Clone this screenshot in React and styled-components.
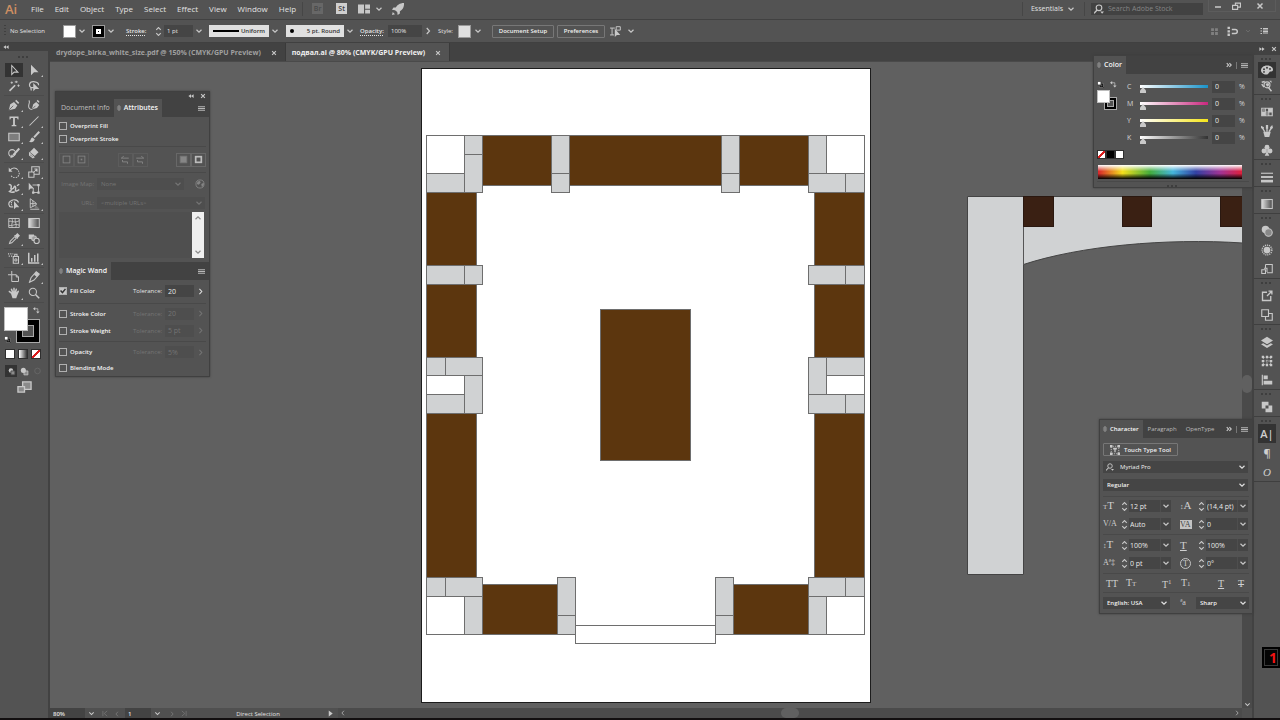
import React, { useState } from 'react';
import styled, { createGlobalStyle, css } from 'styled-components';

const GlobalStyle = createGlobalStyle`
  * {
    box-sizing: border-box;
  }
  body {
    margin: 0;
    background: #535353;
    color: #e2e2e2;
    font-family: 'Open Sans', 'Noto Sans', sans-serif;
    font-size: 7px;
    line-height: 10px;
  }
  button,
  input,
  select,
  textarea {
    margin: 0;
    padding: 0;
    border: 0;
    border-radius: 0;
    background: none;
    color: inherit;
    font: inherit;
  }
  svg {
    display: block;
    flex: none;
  }
`;

/* ---------- icons ---------- */

const Glyph = styled.svg`
  width: ${props => props.$size || 14}px;
  height: ${props => props.$size || 14}px;
  fill: none;
  stroke: currentColor;
  stroke-width: 1.4;
  color: ${props => props.$color || '#c8c8c8'};
`;

const F = { fill: 'currentColor', stroke: 'none' };

const shapes = {
  select: <path d="M5 2v12l3.200-3.200h5z" />,
  direct: <path {...F} d="M4 1v14l4-4h6z" />,
  wand: (
    <>
      <path strokeWidth="2.200" d="M2 14.500L9.500 7" />
      <path d="M11 1v3M9 2.500h4M14 6v3M12.500 7.500h3M5 2v3M3.500 3.500h3" strokeWidth="1.200" />
    </>
  ),
  lasso: (
    <>
      <path d="M8 10c-4 1-6.500-1-6-4 .6-3 4-4 7-3.600 3.500.4 5.500 2.400 5 4.600M4 10c-1 1 1 2 0 4" strokeWidth="1.600" />
      <path {...F} d="M7 4v11l3-3h5z" />
    </>
  ),
  pen: (
    <>
      <path {...F} d="M1 15l2-8 5-3 4.500 4.500-3 4.500zM9.500 2.500L11 1l4 4-1.500 1.500z" />
      <path d="M1.500 14.500L7 9" stroke="#535353" strokeWidth="1" />
    </>
  ),
  curve: (
    <>
      <path {...F} d="M5 14l2-7 4-3 4 4-3 4zM11.500 2.500L13 1l2.500 3L14 5z" />
      <path d="M1 2c3 2-2 6 .5 10 1 2 3 2 4 2" />
      <path d="M5.500 13.500L10 9" stroke="#535353" strokeWidth="1" />
    </>
  ),
  type: <path {...F} d="M2 2h12v4h-1l-1-2H9.200v9l2 .8V15H4.800v-1.200l2-.8V4H4L3 6H2z" />,
  line: <path d="M2 14L14 2" />,
  rect: <rect x="1" y="3" width="14" height="10" fill="#7d7d7d" />,
  brush: (
    <>
      <path strokeWidth="2.600" d="M15 1L8 8.500" />
      <path {...F} d="M1 14c3 0 2-5 5-5.500L9 11c-1 4-5 5-8 3z" />
    </>
  ),
  shaper: (
    <>
      <circle cx="5.500" cy="8" r="4.500" />
      <path strokeWidth="2.600" d="M15 2L7 11" />
      <path {...F} d="M3 15l2-5 3 3z" />
    </>
  ),
  eraser: (
    <>
      <path {...F} d="M8 1l6 6-5 5-6.500-5.500z" />
      <path d="M2 8l6 5.500-1.500 1L2 11z" />
    </>
  ),
  rotate: (
    <>
      <path strokeDasharray="2 1.300" d="M13.500 6A5.800 5.800 0 1 1 4 12.500" />
      <path d="M3 5.500A6 6 0 0 1 13 5" />
      <path {...F} d="M1 2v5.500h5z" />
    </>
  ),
  scale: <path d="M1 8h7v7H1zM5 8V1h10v10H8M7 9l5-5M8.500 4H12v3.500" />,
  warp: <path strokeWidth="2" d="M1 4c3-2 4 2 3 4s3 2 4-1 3 0 2 3 3 2 5 0M1 12c2 2 5 2 8 1M5 10l-3 3M12 5l3-2" />,
  transform: (
    <>
      <path {...F} d="M1 1v10l2.500-2.500H8z" />
      <path d="M6 4h9M6 14h8M7 8v7M14 3v12" strokeWidth="1.200" />
      <path {...F} d="M5.500 12.500h3v3h-3zM12.500 12.500h3v3h-3zM12.500 2.500h3v3h-3z" />
    </>
  ),
  touch: (
    <>
      <path d="M2 2h12v12H2z" strokeDasharray="1.500 1.500" />
      <path {...F} d="M0 0h4v4H0zM12 0h4v4h-4zM0 12h4v4H0zM12 12h4v4h-4zM5 4.500h6V7H9v4.500H7V7H5z" />
    </>
  ),
  builder: (
    <>
      <path d="M7 12H4a3.500 4 0 0 1-1-7.500C6 1 13 2 14 6" strokeWidth="1.600" />
      <path strokeDasharray="1.500 1" d="M6 3c-2 3-2 6 0 9" />
      <path {...F} d="M8 4v11l2.700-2.700H15z" />
    </>
  ),
  perspective: (
    <>
      <path d="M9 8l6 6H9z" fill="#777" stroke="none" />
      <path d="M3 1v12l8-4V7zM3 7.500h8M6.500 3.500v8M3 15h12" strokeWidth="1.200" />
    </>
  ),
  mesh: <path d="M1 2h14v12H1zM1 6c4-2 6 3 14-1M1 11c5 2 8-3 14 0M5 2c3 4-2 8 1 12M10 2c-2 4 3 8 0 12" strokeWidth="1.200" />,
  gradient: <rect x="1" y="2" width="14" height="12" fill="url(#toolFade)" />,
  dropper: (
    <>
      <path d="M2 14l1-3 6-6 2 2-6 6z" />
      <path {...F} d="M8 3l2-.5L12.500 0 16 3.500 13.500 6l-.5 2z" />
    </>
  ),
  blend: (
    <>
      <path {...F} d="M1 2h7v6H1z" />
      <rect x="5" y="4" width="6" height="6" rx="2" fill="#999" />
      <circle cx="11.500" cy="10.500" r="3.500" fill="#535353" />
    </>
  ),
  spray: (
    <>
      <path d="M7 6h7v9H7zM9 6V3h3v3" />
      <circle cx="10.500" cy="10.500" r="1.500" />
      <path strokeDasharray="1.500 1.500" d="M0 2.500h7M1 5.500h5" />
    </>
  ),
  graph: <path strokeWidth="2" d="M1 1v13.500h14M5 8v5M9 4v9M13 2v11" />,
  artboard: <path d="M5 0v5M0 5h5M5 5h6l3 3v6H5zM11 5v3h3" strokeWidth="1.300" />,
  slice: (
    <>
      <path d="M2 15l2-6 7-8 4 3-7 8z" />
      <path {...F} d="M8 5l3-4 4 3-3 4z" />
    </>
  ),
  hand: <path {...F} d="M4 9L1 6.500c-.6-1 .6-2 1.600-1.200L5 7 3.600 3c0-1.400 1.500-1.400 2-.2L7 6V1.500c.2-1.200 1.700-1.200 2 0V6l1.300-3.600c.7-1 2-.5 1.700.7L11.300 7l1.800-2c1-.6 2 .3 1.400 1.300L12 12l-1 3H6z" />,
  zoom: (
    <>
      <circle cx="6.500" cy="6.500" r="4.800" />
      <path strokeWidth="2" d="M10 10l5 5" />
    </>
  ),
  find: (
    <>
      <circle cx="8" cy="6" r="4.500" strokeWidth="1.800" />
      <path strokeWidth="2.200" d="M5 9.500L0 15" />
      <path {...F} d="M10 12h6l-3 3.500z" />
    </>
  ),
  swap: (
    <>
      <path d="M4 4h7v7" strokeWidth="1.600" />
      <path {...F} d="M5 0v8L0 4zM7 10h8l-4 5z" />
    </>
  ),
  defaults: (
    <>
      <rect x="6" y="6" width="8" height="8" stroke="#000" strokeWidth="3" />
      <rect x="5" y="5" width="10" height="10" strokeWidth="1" />
      <path d="M1 1h8v8H1z" fill="#fff" stroke="#222" />
    </>
  ),
  screen: (
    <>
      <path d="M6 2h9v8H6z" fill="#8a8a8a" />
      <path d="M1 7h7v6H1z" fill="#8a8a8a" />
    </>
  ),
  modeA: (
    <>
      <circle cx="7" cy="6" r="4" {...F} />
      <path d="M7 7h7v7H7z" fill="#8b8b8b" stroke="#444" />
    </>
  ),
  modeB: (
    <>
      <path d="M7 7h7v7H7z" fill="#8b8b8b" />
      <circle cx="6" cy="6" r="4.500" {...F} />
    </>
  ),
  modeC: <circle cx="8" cy="7" r="5" />,
  down: <path d="M3 5.500l5 5 5-5" strokeWidth="2.400" />,
  up: <path d="M3 10.500l5-5 5 5" strokeWidth="2.400" />,
  right: <path d="M5.500 2l5.500 6-5.500 6" strokeWidth="2.400" />,
  left: <path d="M10.500 2L5 8l5.500 6" strokeWidth="2.400" />,
  spin: <path d="M4 5l4-4 4 4M4 11l4 4 4-4" strokeWidth="2" />,
  updown: <path d="M4 6l4-5 4 5zM4 10l4 5 4-5z" strokeWidth="1.400" />,
  close: <path d="M3 3l10 10M13 3L3 13" strokeWidth="3" />,
  collapse: <path {...F} d="M8 3v10L1 8zM15 3v10L8 8z" />,
  expand: <path {...F} d="M1 3v10l7-5zM8 3v10l7-5z" />,
  more: <path d="M2 3l5 5-5 5M9 3l5 5-5 5" strokeWidth="3" />,
  menu: <path d="M0 4h16M0 8h16M0 12h16" strokeWidth="2" />,
  first: <path d="M2 2v12M12 2L5 8l7 6" strokeWidth="1.800" />,
  last: <path d="M14 2v12M4 2l7 6-7 6" strokeWidth="1.800" />,
  play: <path {...F} d="M4 1v14l9-7z" />,
  layout: <path {...F} d="M0 2h8v12H0zM9.500 2H16v5.500H9.500zM9.500 9H16v5H9.500z" />,
  rocket: <path {...F} d="M16 0c-6 0-9 3-11 6H2L0 9l4 .5L7 12l.5 4 3-2v-3c3-2 6-5 5.500-11zM1 12l3 3-4 1z" />,
  min: <path d="M2 10h12" strokeWidth="3" />,
  restore: <path d="M1 6h9v7H1zM6 6V2h9v7h-5" strokeWidth="2" />,
  dots: <path {...F} d="M2 2h5v5H2zM9 2h5v5H9zM2 9h5v5H2zM9 9h5v5H9z" />,
  snap: (
    <>
      <path strokeWidth="3.500" strokeDasharray="3.500 1.500" d="M2.500 1v14" />
      <path d="M7 5h5a3 3 0 0 1 0 6H7" strokeWidth="2.200" />
    </>
  ),
  list: <path d="M1 3h3M1 8h3M1 13h3M6 3h10M6 6h10M6 9h10M6 12h10" strokeWidth="2" />,
  isolate: (
    <>
      <path d="M0 3h7M3 3v10M0 13h6M9 1h6v5H9z" />
      <path {...F} d="M7 4v12l3-3h5z" />
    </>
  ),
  box: <rect x="2" y="2" width="12" height="12" strokeWidth="1.600" />,
  boxDot: (
    <>
      <rect x="2" y="2" width="12" height="12" strokeWidth="1.600" />
      <path {...F} d="M6.500 6.500h3v3h-3z" />
    </>
  ),
  flow: <path d="M2 5h12M2 5l4-3M4 11h8M4 11v-3M12 11v3" strokeWidth="1.600" />,
  flowBack: <path d="M2 5h12M14 5l-4-3M4 11h8M12 11v3M4 11V8" strokeWidth="1.600" />,
  solid: <rect x="2" y="2" width="12" height="12" fill="#8c8c8c" stroke="#777" />,
  hollow: <rect x="3" y="3" width="10" height="10" strokeWidth="3" />,
  globe: (
    <>
      <circle cx="8" cy="8" r="6.500" />
      <path {...F} d="M4 4l4-1 1 3-3 3-3-1zM10 8l4-2v4l-3 3z" />
    </>
  ),
  /* dock */
  palette: (
    <>
      <path {...F} d="M8 2c5 0 8 2.500 8 5.500 0 2-2 2.500-3.500 2.500S11 12 9 13.500C5 15 0 12 0 8.500 0 5 3.500 2 8 2z" />
      <g fill="#3a3a3a" stroke="none">
        <circle cx="4" cy="7" r="1.300" />
        <circle cx="4" cy="10.500" r="1.200" />
        <circle cx="8" cy="5" r="1.300" />
        <circle cx="12" cy="6.500" r="1.300" />
      </g>
    </>
  ),
  guide: (
    <>
      <path d="M1 3l4-1M1 5.500l3 4M10 10l4 5" strokeWidth="2" />
      <circle cx="8" cy="6.500" r="4" />
      <path {...F} d="M6 5l4-1 1 3-3 2zM11 1h3v3z" />
    </>
  ),
  swatches: (
    <>
      <path d="M1 3h14v10H1zM1 8h14M5.700 3v10M10.300 3v10" strokeWidth="1.500" />
      <path fill="#8c8c8c" stroke="none" d="M1.700 3.700h3.500v3.600H1.700zM6.400 8.700h3.300v3.600H6.400z" />
      <path {...F} d="M10 3h5v5h-5zM1 8h5v5H1z" />
    </>
  ),
  brushes: (
    <>
      <path {...F} d="M3 9h10l-2 7H5z" />
      <path d="M5 9L2 4M8 9V3M10.500 9L14 4" strokeWidth="1.800" />
      <path {...F} d="M0 1l4 2-1 3-3-2zM6.500 0h3v5h-3zM12 3l3-3 1 4-3 2z" />
    </>
  ),
  club: (
    <g {...F}>
      <circle cx="8" cy="4.300" r="3.300" />
      <circle cx="4" cy="9.200" r="3.300" />
      <circle cx="12" cy="9.200" r="3.300" />
      <path d="M7 7h2v4l2 4.500H5L7 11z" />
    </g>
  ),
  strokes: (
    <>
      <path d="M0 3h16" strokeWidth="1.500" />
      <path d="M0 8h16" strokeWidth="2.500" />
      <path d="M0 13.500h16" strokeWidth="3.500" />
    </>
  ),
  transparency: (
    <>
      <circle cx="6" cy="6" r="5" {...F} />
      <circle cx="10" cy="10" r="5" fill="#888" />
    </>
  ),
  appearance: (
    <>
      <circle cx="8" cy="8" r="4.500" {...F} />
      <circle cx="8" cy="8" r="6.500" strokeDasharray="1.500 1.200" strokeWidth="1.800" />
    </>
  ),
  styles: (
    <>
      <path d="M6 2h9v11H8M6 2v5" />
      <path d="M1 9h5v5H1zM4 7h4v5" />
    </>
  ),
  exportIcon: <path d="M8 3H2v11h11V8M8 8l6-6M10 1.500h4.500V6" strokeWidth="1.800" />,
  overlap: <path d="M1 1h9v9H1zM6 10v5h9V6h-5" strokeWidth="1.500" />,
  layers: (
    <>
      <path {...F} d="M8 1l8 5-8 5-8-5z" />
      <path {...F} d="M3 9.500L0 11l8 5 8-5-3-1.500-5 3z" />
    </>
  ),
  grid: (
    <>
      <path d="M3 3h10v10H3zM3 8h10M8 3v10" strokeDasharray="2 1.400" strokeWidth="1.200" />
      <path {...F} d="M1 1h3v3H1zM6.500 1h3v3h-3zM12 1h3v3h-3zM1 6.500h3v3H1zM12 6.500h3v3h-3zM1 12h3v3H1zM6.500 12h3v3h-3zM12 12h3v3h-3z" />
    </>
  ),
  align: <path {...F} d="M1 1h1.500v14H1zM3.500 2H9v5H3.500zM3.500 9H15v5H3.500z" />,
  pathfinder: <path {...F} d="M1 1h9v5h5v9H6v-5H1zM6 6v4h4V6z" fillRule="evenodd" />,
};

const Icon = ({ name, size, color }) => (
  <Glyph viewBox="0 0 16 16" $size={size} $color={color} aria-hidden="true">
    {shapes[name]}
  </Glyph>
);

/* ---------- shared controls ---------- */

const Grip = styled.div`
  width: 14px;
  height: ${props => props.$height || 5}px;
  margin: 0 auto;
  background: repeating-linear-gradient(90deg, #3e3e3e 0 2px, transparent 2px 4px) center / 12px 2px no-repeat;
`;

const BarHandle = styled.div`
  width: 6px;
  height: 12px;
  background: repeating-linear-gradient(180deg, #404040 0 1px, transparent 1px 3px) left / 2px 12px no-repeat;
`;

const IconButton = styled.button`
  display: flex;
  align-items: center;
  justify-content: center;
  width: ${props => props.$width || 12}px;
  height: ${props => props.$height || 12}px;
  flex: none;
  background: ${props => (props.$active ? '#333333' : 'transparent')};
`;

const Divider = styled.hr`
  width: 1px;
  height: ${props => props.$height || 14}px;
  margin: 0 ${props => props.$gap || 0}px;
  border: 0;
  background: ${props => props.$color || '#464646'};
  flex: none;
`;

const Field = styled.input`
  width: ${props => props.$width}px;
  height: 12px;
  padding: 0 3px;
  background: ${props => (props.disabled ? '#4e4e4e' : '#454545')};
  color: ${props => (props.disabled ? '#747474' : '#e8e8e8')};
  flex: none;
`;

const SelectBox = styled.span`
  display: grid;
  grid-template-columns: minmax(0, 1fr) 12px;
  align-items: center;
  justify-items: center;
  width: ${props => (props.$width ? `${props.$width}px` : 'auto')};
  height: 12px;
  background: ${props => (props.$dim ? '#4e4e4e' : '#454545')};
  font-size: 6px;
  font-weight: ${props => (props.$bold ? 600 : 400)};
  flex: none;

  select {
    grid-area: 1 / 1 / 2 / 3;
    width: 100%;
    height: 12px;
    padding-left: ${props => props.$indent || 4}px;
    appearance: none;
    opacity: 1;
    color: ${props => (props.$dim ? '#747474' : '#f0f0f0')};
  }
  svg {
    grid-area: 1 / 2;
    pointer-events: none;
  }
`;

const Select = ({ label, value, width, dim, bold, indent }) => (
  <SelectBox $width={width} $dim={dim} $bold={bold} $indent={indent}>
    <select aria-label={label} disabled={dim} defaultValue={value}>
      <option>{value}</option>
    </select>
    <Icon name="down" size={8} color={dim ? '#747474' : '#e0e0e0'} />
  </SelectBox>
);

const CheckBox = styled.input`
  appearance: none;
  width: 8px;
  height: 8px;
  border: 1px solid #b0b0b0;
  flex: none;

  &:checked {
    background: #c4c4c4;
  }
  &:checked::before {
    content: '';
    display: block;
    width: 6px;
    height: 6px;
    background: #333;
    clip-path: polygon(0 50%, 18% 35%, 40% 60%, 82% 8%, 100% 22%, 42% 95%);
  }
`;

const CheckLabel = styled.label`
  display: flex;
  align-items: center;
  gap: 3px;
  font-size: 6px;
  font-weight: 600;
  color: #f4f4f4;
`;

const Check = ({ children, checked = false }) => (
  <CheckLabel>
    <CheckBox type="checkbox" defaultChecked={checked} />
    {children}
  </CheckLabel>
);

/* ---------- top bars ---------- */

const Window = styled.div`
  display: flex;
  flex-direction: column;
  min-height: 100vh;
  border-bottom: 2px solid #120f10;
  overflow: hidden;
`;

const MenuBar = styled.header`
  display: flex;
  align-items: center;
  height: 20px;
  padding: 0 4px 2px 5px;
  border-bottom: 1px solid #414141;
`;

const Logo = styled.strong`
  width: 26px;
  font-size: 13px;
  font-weight: 600;
  line-height: 16px;
  color: #cf8f62;
`;

const Menus = styled.nav`
  display: flex;
  gap: 11px;
  margin-right: 6px;
  font-size: 8px;

  button {
    line-height: 14px;
  }
`;

const AppBadge = styled.button`
  width: 11px;
  height: 11px;
  margin-left: ${props => (props.$off ? 9 : 13)}px;
  background: ${props => (props.$off ? '#676767' : '#cfcfcf')};
  color: ${props => (props.$off ? '#4a4a4a' : '#3e3e3e')};
  font-weight: 600;
  line-height: 10px;
`;

const MenuIcons = styled.div`
  display: flex;
  align-items: center;
  gap: 3px;
  padding-left: 11px;
  flex: 1;

  button:last-child {
    margin-left: 4px;
  }
`;

const Workspace = styled.button`
  display: flex;
  align-items: center;
  gap: 4px;
  padding: 0 9px 0 8px;
`;

const Search = styled.label`
  display: flex;
  align-items: center;
  gap: 4px;
  width: 112px;
  height: 12px;
  margin: 0 5px 0 6px;
  padding-left: 3px;
  background: #424242;

  input {
    width: 90px;
  }
  input::placeholder {
    color: #858585;
  }
`;

const WindowButtons = styled.div`
  display: flex;
  align-self: flex-start;
  height: 12px;
  border: 1px solid #5c5c5c;
  border-top: 0;
`;

const ControlBar = styled.div`
  display: flex;
  align-items: center;
  height: 23px;
  padding: 0 10px 0 4px;
  border-bottom: 1px solid #404040;
  font-size: 6px;
`;

const Cluster = styled.div`
  display: flex;
  align-items: center;
  gap: ${props => props.$gap || 0}px;
  width: ${props => (props.$width ? `${props.$width}px` : 'auto')};
  flex: none;
`;

const Spacer = styled.div`
  flex: 1;
`;

const Caption = styled.span`
  width: ${props => (props.$width ? `${props.$width}px` : 'auto')};
  white-space: nowrap;
  font-size: 6px;
  font-weight: ${props => (props.$bold ? 600 : 400)};
  text-decoration: ${props => (props.$link ? 'underline dotted' : 'none')};
  text-underline-offset: 2px;
  color: ${props => (props.$dim ? '#747474' : '#e4e4e4')};
  text-align: ${props => props.$align || 'left'};
`;

const Swatch = styled.button`
  width: 13px;
  height: 13px;
  border: 1px solid #9a9a9a;
  background: ${props => props.$fill || '#ffffff'};
`;

const StrokeSwatch = styled(Swatch)`
  display: grid;
  place-items: center;
  background: #000;

  span {
    width: 5px;
    height: 5px;
    border: 2px solid #fff;
    background: #000;
  }
`;

const Profile = styled.button`
  display: flex;
  align-items: center;
  justify-content: space-between;
  width: ${props => props.$width}px;
  height: 12px;
  padding: 0 4px;
  background: #e0e0e0;
  color: #333;
  font-weight: 600;

  i {
    width: ${props => (props.$dot ? 4 : 26)}px;
    height: ${props => (props.$dot ? 4 : 2)}px;
    border-radius: ${props => (props.$dot ? 2 : 0)}px;
    background: #000;
  }
`;

const TextButton = styled.button`
  display: flex;
  align-items: center;
  justify-content: center;
  gap: 4px;
  width: ${props => props.$width}px;
  height: 13px;
  border: 1px solid #777;
  border-radius: 1px;
  color: #f2f2f2;
  font-size: 6px;
  font-weight: 600;
`;

/* ---------- body ---------- */

const Body = styled.div`
  display: flex;
  flex: 1;
  position: relative;
`;

const Toolbox = styled.aside`
  width: 50px;
  border-right: 2px solid #424242;
  flex: none;
`;

const StripHeader = styled.div`
  display: flex;
  align-items: center;
  justify-content: ${props => (props.$right ? 'flex-end' : 'flex-start')};
  gap: 6px;
  height: ${props => props.$height}px;
  padding: 0 3px;
  background: #424242;
`;

const ToolGroup = styled.div`
  display: grid;
  grid-template-columns: 20px 20px;
  grid-auto-rows: 16px;
  margin: 0 4px 1px;
  padding-bottom: 1px;
  border-bottom: 1px solid #4b4b4b;
`;

const Tool = styled.button`
  display: grid;
  place-items: center;
  position: relative;
  background: ${props => (props.$active ? '#333333' : 'transparent')};
  margin: 1px;

  &::after {
    content: '';
    position: absolute;
    right: 0;
    bottom: 0;
    border: 1px solid transparent;
    border-right-color: #c0c0c0;
    border-bottom-color: #c0c0c0;
    display: ${props => (props.$plain ? 'none' : 'block')};
  }
`;

const FillStroke = styled.div`
  display: grid;
  grid-template-columns: ${props => (props.$small ? '7px 6px 7px' : '12px 12px 12px')};
  grid-template-rows: ${props => (props.$small ? '7px 6px 7px' : '12px 12px 12px')};
  width: max-content;
`;

const FillButton = styled.button`
  grid-area: 1 / 1 / 3 / 3;
  z-index: 1;
  background: #fff;
  border: 1px solid #bdbdbd;
`;

const StrokeButton = styled.button`
  grid-area: 2 / 2 / 4 / 4;
  background: #535353;
  border: ${props => (props.$small ? 3 : 6)}px solid #000;
  outline: 1px solid #aaa;
  outline-offset: -1px;
  box-shadow: inset 0 0 0 1px #aaa;
`;

const CornerButton = styled.button`
  grid-area: ${props => (props.$end ? '1 / 3' : '3 / 1')};
  align-self: ${props => (props.$end ? 'start' : 'end')};
  justify-self: ${props => (props.$end ? 'end' : 'start')};
`;

const ToolColors = styled.div`
  padding: 3px 4px 0;
`;

const ChipRow = styled.div`
  display: flex;
  gap: ${props => props.$gap || 0}px;
  padding: 0 5px;
  margin-top: ${props => props.$top || 0}px;
`;

const Chip = styled.button`
  width: ${props => props.$size}px;
  height: ${props => props.$size}px;
  border: 1px solid #2f2f2f;
  background: ${props => props.$fill};
`;

const Main = styled.main`
  display: flex;
  flex-direction: column;
  flex: 1;
  min-width: 0;
`;

const Tabs = styled.div`
  display: flex;
  height: 19px;
  background: #424242;
  border-bottom: 1px solid #4a4a4a;
`;

const DocTab = styled.button`
  display: flex;
  align-items: center;
  gap: 10px;
  padding: 1px 8px 0 6px;
  font-weight: 700;
  color: ${props => (props.$active ? '#f0f0f0' : '#a0a0a0')};
  background: ${props => (props.$active ? '#535353' : 'transparent')};
  border-right: 1px solid #3a3a3a;
`;

const View = styled.div`
  display: flex;
  flex: 1;
  min-height: 0;
  background: #606060;
`;

const Artwork = styled.svg`
  flex: 1;
  min-width: 0;
  width: 100%;
  min-height: 100%;
  height: auto;
`;

const VScroll = styled.div`
  display: flex;
  flex-direction: column;
  align-items: center;
  justify-content: space-between;
  width: 10px;
  padding-top: 313px;
  background: #4a4a4a;
  flex: none;
`;

const Thumb = styled.div`
  width: ${props => (props.$wide ? 18 : 10)}px;
  height: ${props => (props.$wide ? 10 : 18)}px;
  border-radius: 5px;
  background: #606060;
`;

const StatusBar = styled.footer`
  display: flex;
  align-items: center;
  height: 10px;
  background: #4b4b4b;
  font-size: 6px;
`;

const StatusPart = styled.div`
  display: flex;
  align-items: center;
  justify-content: ${props => props.$justify || 'flex-start'};
  width: ${props => props.$width}px;
  height: 10px;
  padding: 1px 3px 0;
  background: ${props => (props.$field ? '#434343' : '#505050')};

  input {
    width: 19px;
    font-weight: 600;
  }
`;

const HScroll = styled.div`
  display: flex;
  align-items: center;
  justify-content: space-between;
  flex: 1;
  height: 10px;
  padding: 0 2px;
`;

const Dock = styled.aside`
  width: 28px;
  border-left: 2px solid #424242;
  flex: none;
`;

const DockGroup = styled.div`
  display: flex;
  flex-direction: column;
  align-items: center;
  border-bottom: 1px solid #3f3f3f;

  button {
    width: 18px;
    height: ${props => (props.$tight ? 16 : 19)}px;
  }
`;

const DockLetter = styled.span`
  font-size: 11px;
  line-height: 14px;
  font-weight: ${props => (props.$serif ? 400 : 600)};
  font-style: ${props => (props.$serif ? 'italic' : 'normal')};
  font-family: ${props => (props.$serif ? "'Liberation Serif', serif" : 'inherit')};
  color: #cfcfcf;
`;

const CounterBadge = styled.div`
  position: absolute;
  right: 0;
  top: 604px;
  width: 18px;
  height: 21px;
  border: 2px solid #000;
  border-right: 0;
  outline: 1px solid #3a3a3a;
  outline-offset: -3px;
  background: #050505;
  color: #f01414;
  font-size: 14px;
  font-weight: 700;
  line-height: 17px;
  text-align: right;
  padding-right: 3px;
`;

/* ---------- floating panels ---------- */

const Panel = styled.section`
  position: absolute;
  width: ${props => props.$width}px;
  background: #535353;
  border: 1px solid #404040;
  box-shadow: 0 0 2px #3c3c3c;
  ${props => props.$place}
`;

const PanelTabs = styled.div`
  display: flex;
  align-items: center;
  height: 18px;
  padding-right: 4px;
  background: #424242;
`;

const PanelTab = styled.button`
  display: flex;
  align-items: center;
  gap: 2px;
  height: 100%;
  padding: 0 4px 0 ${props => (props.$active ? 2 : 5)}px;
  white-space: nowrap;
  font-size: ${props => props.$font || 7}px;
  font-weight: ${props => (props.$active ? 600 : 400)};
  color: ${props => (props.$active ? '#f6f6f6' : '#bdbdbd')};
  background: ${props => (props.$active ? '#535353' : 'transparent')};
`;

const Row = styled.div`
  display: flex;
  align-items: center;
  gap: ${props => props.$gap || 0}px;
  height: ${props => props.$height}px;
  padding: 0 ${props => (props.$pad === undefined ? 3 : props.$pad)}px;
`;

const Rule = styled.hr`
  height: 1px;
  margin: ${props => props.$gap || 0}px 3px;
  border: 0;
  background: #494949;
`;

const ButtonPair = styled.div`
  display: flex;
  opacity: ${props => (props.$dim ? 0.4 : 0.9)};

  button {
    width: 15px;
    height: 14px;
    border: 1px solid #6b6b6b;
  }
`;

const MapText = styled.div`
  display: flex;
  margin: 0 5px 4px 3px;
  height: 46px;
  background: #4f4f4f;

  textarea {
    flex: 1;
    min-width: 0;
    resize: none;
  }
`;

const MapScroll = styled.div`
  display: flex;
  flex-direction: column;
  align-items: center;
  justify-content: space-between;
  width: 12px;
  padding: 2px 0;
  background: #efefef;
`;

const ColorBody = styled.div`
  display: grid;
  grid-template-columns: 30px 1fr;
  padding: 4px 4px 0 3px;
`;

const Channel = styled.label`
  display: grid;
  grid-template-columns: 9px 68px 23px 10px;
  column-gap: 4px;
  align-items: center;
  height: 17px;
  color: #d4d4d4;
`;

const Slider = styled.input`
  appearance: none;
  width: 68px;
  height: 12px;

  &::-webkit-slider-runnable-track {
    height: 3px;
    background: linear-gradient(90deg, #fff, ${props => props.$to});
  }
  &::-webkit-slider-thumb {
    appearance: none;
    width: 6px;
    height: 6px;
    margin-top: 2px;
    background: #c9c9c9;
    clip-path: polygon(50% 0, 100% 60%, 100% 100%, 0 100%, 0 60%);
  }
`;

const Spectrum = styled.div`
  height: 14px;
  margin: 2px 10px 0 4px;
  background: linear-gradient(180deg, #fff, rgba(255, 255, 255, 0) 45%, rgba(0, 0, 0, 0) 60%, #000),
    linear-gradient(90deg, #d8242c, #f4e01c 17%, #44ad3c 36%, #45b6dd 52%, #3241a4 68%, #a23395 85%, #e0203c);
`;

const Metrics = styled.div`
  display: flex;
  justify-content: space-between;
  align-items: center;
  height: 18px;
  padding: 0 4px 0 3px;

  input {
    padding: 0 1px;
  }
`;

const MetricGrid = styled.div`
  display: grid;
  grid-template-columns: 16px 10px 31px 11px;
  align-items: center;
`;

const MetricIcon = styled.span`
  display: block;
  font-family: 'Liberation Serif', serif;
  font-size: ${props => (props.$small ? 8 : 11)}px;
  line-height: 12px;
  white-space: nowrap;
  color: #cfcfcf;
  ${props =>
    props.$boxed &&
    css`
      width: 12px;
      line-height: 9px;
      background: #c4c4c4;
      color: #444;
    `}
  ${props =>
    props.$round &&
    css`
      width: 11px;
      height: 11px;
      border: 1px solid #c4c4c4;
      border-radius: 50%;
      line-height: 9px;
      text-align: center;
    `}

  small {
    font-size: 7px;
  }
`;

const MetricDrop = styled(IconButton)`
  background: #454545;
  border-left: 1px solid #4e4e4e;
`;

const CaseRow = styled.div`
  display: grid;
  grid-template-columns: 20px 36px 19px 37px 20px 12px;
  height: 17px;
  align-items: center;
  padding-left: 6px;
  font-family: 'Liberation Serif', serif;
  font-size: 10px;
  color: #d0d0d0;

  button {
    line-height: 12px;
    text-align: left;
  }
  small {
    font-size: 7px;
  }
`;

const FontSelect = styled.label`
  display: grid;
  align-items: center;

  > * {
    grid-area: 1 / 1;
  }
  > svg {
    z-index: 1;
    margin-left: 3px;
  }
`;

/* ---------- data ---------- */

const menuNames = ['File', 'Edit', 'Object', 'Type', 'Select', 'Effect', 'View', 'Window', 'Help'];

const toolGroups = [
  ['select', 'direct', 'wand', 'lasso'],
  ['pen', 'curve', 'type', 'line', 'rect', 'brush', 'shaper', 'eraser'],
  ['rotate', 'scale', 'warp', 'transform', 'builder', 'perspective'],
  ['mesh', 'gradient', 'dropper', 'blend'],
  ['spray', 'graph'],
  ['artboard', 'slice', 'hand', 'zoom'],
];

const plainTools = ['select', 'wand', 'lasso', 'curve', 'mesh', 'gradient', 'blend', 'artboard', 'zoom', 'transform'];

const dockGroups = [
  ['palette', 'guide'],
  ['swatches', 'brushes', 'club'],
  ['strokes'],
  ['gradient'],
  ['transparency', 'appearance', 'styles'],
  ['exportIcon', 'overlap'],
  ['layers', 'grid', 'align'],
  ['pathfinder'],
];

const channels = [
  ['C', '#1a93c9'],
  ['M', '#c9287e'],
  ['Y', '#f5e51b'],
  ['K', '#333333'],
];

// x, y, width, height
const timber = [
  [482, 135, 69, 50], [569, 135, 152, 50], [739, 135, 69, 50],
  [426, 192, 50, 73], [426, 284, 50, 73], [426, 413, 50, 165],
  [814, 192, 50, 73], [814, 284, 50, 73], [814, 413, 50, 165],
  [482, 584, 75, 50], [733, 584, 75, 50], [600, 309, 90, 151],
];

const stone = [
  [464, 135, 18, 19], [464, 154, 18, 38], [426, 173, 38, 19],
  [551, 135, 18, 38], [551, 173, 18, 19], [721, 135, 18, 38], [721, 173, 18, 19],
  [808, 135, 18, 38], [808, 173, 37, 19], [845, 173, 19, 19],
  [426, 265, 38, 19], [464, 265, 18, 19], [808, 265, 37, 19], [845, 265, 19, 19],
  [426, 357, 19, 18], [445, 357, 37, 18], [464, 375, 18, 38], [426, 394, 38, 19],
  [808, 357, 18, 37], [826, 357, 38, 18], [808, 394, 37, 19], [845, 394, 19, 19],
  [426, 577, 19, 19], [445, 577, 37, 19], [464, 596, 18, 38],
  [557, 577, 18, 38], [557, 615, 18, 19], [715, 577, 18, 38], [715, 615, 18, 19],
  [808, 577, 37, 19], [845, 577, 19, 19], [808, 596, 18, 38],
];

const openings = [
  [426, 135, 38, 38], [826, 135, 38, 38], [426, 375, 38, 19], [826, 375, 38, 19],
  [426, 596, 38, 38], [826, 596, 38, 38], [575, 625, 140, 18],
];

const Blocks = ({ items, fill, stroke = '#6e6e6e' }) =>
  items.map(([x, y, width, height]) => (
    <rect key={`${x}-${y}`} x={x + 0.5} y={y + 0.5} width={width} height={height} fill={fill} stroke={stroke} />
  ));

const Drawing = () => (
  <Artwork role="img" aria-label="Basement plan">
    <g transform="translate(-50 -62)">
      <rect x="421.5" y="68.500" width="449" height="634" fill="#fff" stroke="#1c1c1c" />
      <Blocks items={openings} fill="#fff" />
      <Blocks items={timber} fill="#5c360e" />
      <Blocks items={stone} fill="#d0d2d3" />
      <path
        d="M967.500 196.500H1243V243C1165 238 1080 246 1023.500 264.500V574.500H967.500z"
        fill="#d0d2d3"
        stroke="#444"
      />
      <path d="M1023.500 196.500V265" stroke="#555" />
      <Blocks items={[[1023, 196, 30, 30], [1122, 196, 29, 30], [1220, 196, 30, 30]]} fill="#3a2013" stroke="#2a1810" />
    </g>
  </Artwork>
);

/* ---------- parts ---------- */

const TopMenu = () => (
  <MenuBar>
    <Logo>Ai</Logo>
    <Menus>
      {menuNames.map(name => (
        <button key={name}>{name}</button>
      ))}
    </Menus>
    <Divider />
    <AppBadge $off>Br</AppBadge>
    <AppBadge>St</AppBadge>
    <MenuIcons>
      <IconButton aria-label="Arrange documents"><Icon name="layout" size={12} /></IconButton>
      <IconButton aria-label="Arrange options"><Icon name="down" size={8} /></IconButton>
      <IconButton aria-label="GPU performance"><Icon name="rocket" size={12} /></IconButton>
    </MenuIcons>
    <Divider />
    <Workspace>Essentials <Icon name="down" size={8} /></Workspace>
    <Divider />
    <Search>
      <Icon name="find" size={10} />
      <input placeholder="Search Adobe Stock" aria-label="Search Adobe Stock" />
    </Search>
    <WindowButtons>
      <IconButton $width={18} aria-label="Minimize"><Icon name="min" size={8} /></IconButton>
      <IconButton $width={18} aria-label="Restore"><Icon name="restore" size={9} /></IconButton>
      <IconButton $width={30} aria-label="Close"><Icon name="close" size={8} /></IconButton>
    </WindowButtons>
  </MenuBar>
);

const Options = () => (
  <ControlBar>
    <BarHandle />
    <Caption $width={53}>No Selection</Caption>
    <Cluster $width={29}>
      <Swatch aria-label="Fill" />
      <IconButton aria-label="Fill options"><Icon name="down" size={8} /></IconButton>
    </Cluster>
    <Cluster $width={34}>
      <StrokeSwatch aria-label="Stroke"><span /></StrokeSwatch>
      <IconButton aria-label="Stroke options"><Icon name="down" size={8} /></IconButton>
    </Cluster>
    <Cluster $width={83}>
      <Caption as="label" htmlFor="stroke-size" $bold $link $width={26}>Stroke:</Caption>
      <IconButton aria-label="Step stroke"><Icon name="spin" size={9} /></IconButton>
      <Field id="stroke-size" $width={29} defaultValue="1 pt" />
      <IconButton aria-label="Stroke presets"><Icon name="down" size={8} /></IconButton>
    </Cluster>
    <Cluster $width={77}>
      <Profile $width={60}><i />Uniform</Profile>
      <IconButton aria-label="Profiles"><Icon name="down" size={8} /></IconButton>
    </Cluster>
    <Cluster $width={74}>
      <Profile $width={58} $dot><i />5 pt. Round</Profile>
      <IconButton aria-label="Brushes"><Icon name="down" size={8} /></IconButton>
    </Cluster>
    <Cluster $width={78}>
      <Caption as="label" htmlFor="opacity" $bold $link $width={28}>Opacity:</Caption>
      <Field id="opacity" $width={34} defaultValue="100%" />
      <IconButton aria-label="Opacity slider"><Icon name="right" size={8} /></IconButton>
    </Cluster>
    <Cluster $gap={1} $width={54}>
      <Caption $width={19}>Style:</Caption>
      <Swatch $fill="#e0e0e0" aria-label="Style" />
      <IconButton aria-label="Styles"><Icon name="down" size={8} /></IconButton>
    </Cluster>
    <Cluster $gap={3}>
      <TextButton $width={62}>Document Setup</TextButton>
      <TextButton $width={48}>Preferences</TextButton>
    </Cluster>
    <Cluster>
      <IconButton $width={20} aria-label="Isolate"><Icon name="isolate" size={11} /></IconButton>
      <IconButton aria-label="Isolate options"><Icon name="down" size={8} /></IconButton>
    </Cluster>
    <Spacer />
    <Cluster $gap={6}>
      <IconButton aria-label="Pixel grid"><Icon name="dots" size={9} color="#808080" /></IconButton>
      <IconButton aria-label="Snap"><Icon name="snap" size={11} /></IconButton>
      <IconButton $width={8} aria-label="Snap options"><Icon name="down" size={6} color="#707070" /></IconButton>
      <IconButton aria-label="Panel list"><Icon name="list" size={8} /></IconButton>
    </Cluster>
  </ControlBar>
);

const none = 'linear-gradient(135deg, #fff 42%, #d91c1c 42% 58%, #fff 58%)';

const Tools = () => {
  const [tool, setTool] = useState('select');
  return (
    <Toolbox>
      <StripHeader $height={8}><Icon name="collapse" size={6} /></StripHeader>
      <Grip $height={11} />
      {toolGroups.map(group => (
        <ToolGroup key={group[0]}>
          {group.map(name => (
            <Tool
              key={name}
              aria-label={name}
              $active={tool === name}
              $plain={plainTools.includes(name)}
              onClick={() => setTool(name)}
            >
              <Icon name={name} size={12} />
            </Tool>
          ))}
        </ToolGroup>
      ))}
      <ToolColors>
        <FillStroke>
          <FillButton aria-label="Fill color" />
          <CornerButton $end aria-label="Swap fill and stroke"><Icon name="swap" size={7} /></CornerButton>
          <CornerButton aria-label="Default colors"><Icon name="defaults" size={7} /></CornerButton>
          <StrokeButton aria-label="Stroke color" />
        </FillStroke>
      </ToolColors>
      <ChipRow $gap={3} $top={6}>
        <Chip $size={10} $fill="#fff" aria-label="Color" />
        <Chip $size={10} $fill="linear-gradient(90deg, #fff, #333)" aria-label="Gradient" />
        <Chip $size={10} $fill={none} aria-label="None" />
      </ChipRow>
      <ChipRow $gap={1} $top={6}>
        <IconButton $active aria-label="Draw normal"><Icon name="modeA" size={9} /></IconButton>
        <IconButton aria-label="Draw behind"><Icon name="modeB" size={9} /></IconButton>
        <IconButton aria-label="Draw inside"><Icon name="modeC" size={9} color="#6a6a6a" /></IconButton>
      </ChipRow>
      <ChipRow $top={4}>
        <IconButton $width={38} aria-label="Screen mode"><Icon name="screen" size={15} /></IconButton>
      </ChipRow>
    </Toolbox>
  );
};

const Wand = ({ name, value, checked, height }) => (
  <Row $height={height}>
    <Check checked={checked}>{name}</Check>
    <Spacer />
    {value && (
      <>
        <Caption $width={32} $dim={!checked}>Tolerance:</Caption>
        <Field $width={29} aria-label={`${name} tolerance`} defaultValue={value} disabled={!checked} />
        <IconButton disabled={!checked} aria-label={`${name} tolerance slider`}>
          <Icon name="right" size={7} color={checked ? '#e0e0e0' : '#747474'} />
        </IconButton>
      </>
    )}
  </Row>
);

const AttributesPanel = () => (
  <Panel $width={155} $place="left: 55px; top: 48px;">
    <StripHeader $height={7} $right>
      <Icon name="collapse" size={6} />
      <Icon name="close" size={6} />
    </StripHeader>
    <PanelTabs>
      <PanelTab>Document Info</PanelTab>
      <PanelTab $active><Icon name="updown" size={6} />Attributes</PanelTab>
      <Spacer />
      <Icon name="menu" size={7} />
    </PanelTabs>
    <Row $height={2} />
    <Row $height={13}><Check>Overprint Fill</Check></Row>
    <Row $height={13}><Check>Overprint Stroke</Check></Row>
    <Rule $gap={1} />
    <Row $height={23}>
      <ButtonPair $dim>
        <IconButton aria-label="Hide center"><Icon name="box" size={9} /></IconButton>
        <IconButton aria-label="Show center"><Icon name="boxDot" size={9} /></IconButton>
      </ButtonPair>
      <Spacer />
      <ButtonPair $dim>
        <IconButton aria-label="Reverse path off"><Icon name="flow" size={10} /></IconButton>
        <IconButton aria-label="Reverse path on"><Icon name="flowBack" size={10} /></IconButton>
      </ButtonPair>
      <Spacer />
      <ButtonPair>
        <IconButton aria-label="Non-zero winding"><Icon name="solid" size={9} /></IconButton>
        <IconButton aria-label="Even-odd fill"><Icon name="hollow" size={9} /></IconButton>
      </ButtonPair>
    </Row>
    <Rule $gap={1} />
    <Row $height={19} $gap={3}>
      <Caption $dim $width={35} $align="right">Image Map:</Caption>
      <Select label="Image map" value="None" width={87} dim />
      <Spacer />
      <IconButton aria-label="Browse"><Icon name="globe" size={10} color="#858585" /></IconButton>
    </Row>
    <Row $height={19} $gap={3}>
      <Caption $dim $width={35} $align="right">URL:</Caption>
      <Select label="URL" value="<multiple URLs>" width={108} dim />
    </Row>
    <MapText>
      <textarea aria-label="URL list" />
      <MapScroll>
        <Icon name="up" size={8} color="#8a8a8a" />
        <Icon name="down" size={8} color="#8a8a8a" />
      </MapScroll>
    </MapText>
    <PanelTabs>
      <PanelTab $active><Icon name="updown" size={6} />Magic Wand</PanelTab>
      <Spacer />
      <Icon name="menu" size={7} />
    </PanelTabs>
    <Wand name="Fill Color" value="20" checked height={22} />
    <Rule $gap={1} />
    <Wand name="Stroke Color" value="20" height={17} />
    <Wand name="Stroke Weight" value="5 pt" height={17} />
    <Rule $gap={2} />
    <Wand name="Opacity" value="5%" height={16} />
    <Wand name="Blending Mode" height={16} />
  </Panel>
);

const ColorPanel = () => (
  <Panel $width={160} $place="right: 27px; top: 12px;">
    <PanelTabs>
      <PanelTab $active><Icon name="updown" size={6} />Color</PanelTab>
      <Spacer />
      <Icon name="more" size={6} />
      <Divider $height={7} $gap={4} $color="#777" />
      <Icon name="menu" size={7} />
    </PanelTabs>
    <ColorBody>
      <div>
        <Row $height={12} $gap={6} $pad={0}>
          <Icon name="defaults" size={7} />
          <Icon name="swap" size={7} />
        </Row>
        <FillStroke $small>
          <FillButton aria-label="Fill color" />
          <StrokeButton $small aria-label="Stroke color" />
        </FillStroke>
      </div>
      <div>
        {channels.map(([name, color]) => (
          <Channel key={name}>
            {name}
            <Slider type="range" defaultValue={0} $to={color} aria-label={`${name} amount`} />
            <Field $width={23} defaultValue="0" aria-label={name} />
            %
          </Channel>
        ))}
      </div>
    </ColorBody>
    <Row $height={17}>
      <Chip $size={9} $fill={none} aria-label="None" />
      <Chip $size={9} $fill="#000" aria-label="Black" />
      <Chip $size={9} $fill="#fff" aria-label="White" />
    </Row>
    <Spectrum />
    <Rule $gap={2} />
    <Grip $height={3} />
  </Panel>
);

const Metric = ({ name, value, children }) => (
  <MetricGrid>
    {children}
    <IconButton $width={10} aria-label={`Step ${name}`}><Icon name="spin" size={9} /></IconButton>
    <Field $width={31} defaultValue={value} aria-label={name} />
    <MetricDrop $width={11} aria-label={`${name} presets`}><Icon name="down" size={8} /></MetricDrop>
  </MetricGrid>
);

const CharacterPanel = () => (
  <Panel $width={154} $place="right: 27px; top: 376px;">
    <PanelTabs>
      <PanelTab $active $font={6}><Icon name="updown" size={6} />Character</PanelTab>
      <PanelTab $font={6}>Paragraph</PanelTab>
      <PanelTab $font={6}>OpenType</PanelTab>
      <Spacer />
      <Icon name="more" size={6} />
      <Divider $height={7} $gap={4} $color="#777" />
      <Icon name="menu" size={7} />
    </PanelTabs>
    <Row $height={23}>
      <TextButton $width={75}><Icon name="touch" size={10} />Touch Type Tool</TextButton>
    </Row>
    <Row $height={12}>
      <FontSelect>
        <Icon name="find" size={8} />
        <Select label="Font family" value="Myriad Pro" width={145} indent={17} />
      </FontSelect>
    </Row>
    <Row $height={23}>
      <Select label="Font style" value="Regular" width={145} bold />
    </Row>
    <Rule />
    <Metrics>
      <Metric name="Font size" value="12 pt"><MetricIcon><small>T</small>T</MetricIcon></Metric>
      <Metric name="Leading" value="(14,4 pt)"><MetricIcon><small>↕</small>A</MetricIcon></Metric>
    </Metrics>
    <Metrics>
      <Metric name="Kerning" value="Auto"><MetricIcon $small>V/A</MetricIcon></Metric>
      <Metric name="Tracking" value="0"><MetricIcon $small $boxed>VA</MetricIcon></Metric>
    </Metrics>
    <Rule $gap={1} />
    <Metrics>
      <Metric name="Vertical scale" value="100%"><MetricIcon><small>↕</small>T</MetricIcon></Metric>
      <Metric name="Horizontal scale" value="100%"><MetricIcon><u>T</u></MetricIcon></Metric>
    </Metrics>
    <Metrics>
      <Metric name="Baseline shift" value="0 pt"><MetricIcon $small>Aª‡</MetricIcon></Metric>
      <Metric name="Rotation" value="0°"><MetricIcon $small $round>T</MetricIcon></Metric>
    </Metrics>
    <Rule $gap={1} />
    <CaseRow>
      <button>TT</button>
      <button>T<small>T</small></button>
      <button>T<sup><small>1</small></sup></button>
      <button>T<small>1</small></button>
      <button><u>T</u></button>
      <button><s>T</s></button>
    </CaseRow>
    <Rule />
    <Row $height={20}>
      <Select label="Language" value="English: USA" width={67} bold />
      <Spacer />
      <MetricIcon $small>ªa</MetricIcon>
      <Spacer />
      <Select label="Anti-aliasing" value="Sharp" width={53} bold />
    </Row>
  </Panel>
);

const RightDock = () => (
  <Dock>
    <StripHeader $height={12} $right>
      <Icon name="expand" size={6} />
      <Icon name="close" size={6} />
    </StripHeader>
    {dockGroups.map((group, i) => (
      <DockGroup key={group[0]} $tight={i === 0}>
        <Grip $height={7} />
        {group.map(name => (
          <IconButton key={name} aria-label={name} $active={name === 'palette'}>
            <Icon name={name} size={12} />
          </IconButton>
        ))}
      </DockGroup>
    ))}
    <DockGroup>
      <Grip $height={7} />
      <IconButton $active aria-label="Character"><DockLetter>A|</DockLetter></IconButton>
      <IconButton aria-label="Paragraph"><DockLetter>¶</DockLetter></IconButton>
      <IconButton aria-label="OpenType"><DockLetter $serif>O</DockLetter></IconButton>
    </DockGroup>
  </Dock>
);

const Status = () => (
  <StatusBar>
    <StatusPart $field $width={35}><input defaultValue="80%" aria-label="Zoom level" /></StatusPart>
    <StatusPart $width={12}><Icon name="down" size={7} /></StatusPart>
    <StatusPart $width={28} $justify="space-around">
      <Icon name="first" size={7} color="#777" />
      <Icon name="left" size={6} color="#777" />
    </StatusPart>
    <StatusPart $field $width={26}><input defaultValue="1" aria-label="Artboard" /></StatusPart>
    <StatusPart $width={12}><Icon name="down" size={7} /></StatusPart>
    <StatusPart $width={29} $justify="space-around">
      <Icon name="right" size={6} color="#777" />
      <Icon name="last" size={7} color="#777" />
    </StatusPart>
    <StatusPart $width={132} $justify="center">Direct Selection</StatusPart>
    <StatusPart $width={14}><Icon name="play" size={7} /></StatusPart>
    <HScroll>
      <Icon name="left" size={6} color="#aaa" />
      <Thumb $wide />
      <Icon name="right" size={6} color="#aaa" />
    </HScroll>
    <StatusPart $width={10} />
  </StatusBar>
);

const App = () => (
  <Window>
    <GlobalStyle />
    <svg width="0" height="0" style={{ position: 'absolute' }}>
      <defs>
        <linearGradient id="toolFade">
          <stop offset="0" stopColor="#e0e0e0" />
          <stop offset="1" stopColor="#4a4a4a" />
        </linearGradient>
      </defs>
    </svg>
    <TopMenu />
    <Options />
    <Body>
      <Tools />
      <Main>
        <Tabs>
          <DocTab>drydope_birka_white_size.pdf @ 150% (CMYK/GPU Preview) <Icon name="close" size={6} /></DocTab>
          <DocTab $active>подвал.ai @ 80% (CMYK/GPU Preview) <Icon name="close" size={6} /></DocTab>
        </Tabs>
        <View>
          <Drawing />
          <VScroll>
            <Thumb />
            <Icon name="down" size={7} />
          </VScroll>
        </View>
        <Status />
      </Main>
      <RightDock />
      <AttributesPanel />
      <ColorPanel />
      <CharacterPanel />
      <CounterBadge>1</CounterBadge>
    </Body>
  </Window>
);

export default App;
